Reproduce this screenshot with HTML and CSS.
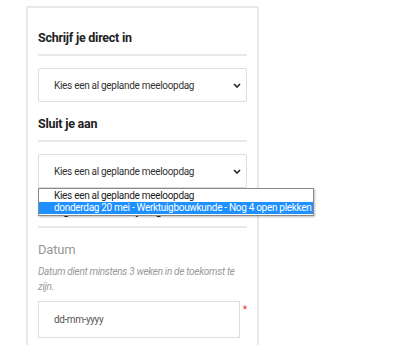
FILE: index.html
```html
<!DOCTYPE html>
<html lang="nl">
<head>
<meta charset="utf-8">
<title>Meeloopdag</title>
<link rel="stylesheet" href="styles.css">
</head>
<body>
<div class="card">
  <h2 class="title">Schrijf je direct in</h2>
  <div class="rule"></div>
  <div class="select">
    <span class="select-text">Kies een al geplande meeloopdag</span>
    <svg class="chev" width="8" height="5" viewBox="0 0 8 5"><path d="M1 1 L4 4 L7 1" fill="none" stroke="#222" stroke-width="1.6"/></svg>
  </div>
  <h2 class="title">Sluit je aan</h2>
  <div class="rule"></div>
  <div class="select">
    <span class="select-text">Kies een al geplande meeloopdag</span>
    <svg class="chev" width="8" height="5" viewBox="0 0 8 5"><path d="M1 1 L4 4 L7 1" fill="none" stroke="#222" stroke-width="1.6"/></svg>
  </div>
  <h2 class="title">Vraag een meeloopdag aan</h2>
  <div class="rule"></div>
  <div class="label">Datum</div>
  <p class="help">Datum dient minstens 3 weken in de toekomst te zijn.</p>
  <div class="field-row">
    <div class="input">dd-mm-yyyy</div>
    <span class="req">*</span>
  </div>
</div>
<div class="dropdown">
  <div class="opt">Kies een al geplande meeloopdag</div>
  <div class="opt sel">donderdag 20 mei - Werktuigbouwkunde - Nog 4 open plekken</div>
</div>
</body>
</html>
```
FILE: styles.css
```css
html, body { margin: 0; padding: 0; background: #fff; }
body { font-family: Roboto, "Liberation Sans", sans-serif; color: #222; position: relative; height: 345px; overflow: hidden; }
.card {
  margin: 6px 0 0 26px;
  width: 209px;
  padding: 20px 10px 0 10px;
  border: 2px solid #e8e8e8;
  border-bottom: none;
  min-height: 400px;
}
.title { margin: 0; font-size: 12.5px; font-weight: 700; line-height: 20px; color: #222; letter-spacing: -0.25px; }
.rule { height: 2px; background: #e8e8e8; margin: 6px 0 12px; }
.select {
  height: 32px;
  border: 1px solid #ddd;
  border-radius: 2px;
  display: flex; align-items: center;
  padding: 0 5px 0 15px;
  margin-bottom: 12px;
}
.select-text { flex: 1; font-size: 10px; color: #333; letter-spacing: -0.3px; }
.chev { flex: none; }
.label { font-size: 13px; color: #999; line-height: 20px; margin-top: 11px; letter-spacing: -0.2px; }
.help { margin: 4px 0 7px; font-size: 10px; font-style: italic; color: #999; line-height: 15px; letter-spacing: -0.3px; }
.field-row { display: flex; align-items: flex-start; gap: 3px; }
.input {
  width: 188px; height: 35px;
  border: 1px solid #ddd;
  display: flex; align-items: center;
  padding-left: 15px;
  font-size: 10px; color: #555; letter-spacing: -0.4px;
}
.req { color: #e33; font-size: 10px; line-height: 10px; margin-top: 4px; }
.dropdown {
  position: absolute; left: 38px; top: 188px;
  border: 1px solid #8a8a8a;
  background: #fff;
  box-shadow: 1px 1px 2px rgba(0,0,0,.25);
  padding: 1px 0;
}
.opt { font-size: 10px; line-height: 12px; padding: 0 2px 0 15px; color: #222; white-space: nowrap; letter-spacing: -0.3px; }
.opt.sel { background: #1e90ff; color: #fff; }
```
